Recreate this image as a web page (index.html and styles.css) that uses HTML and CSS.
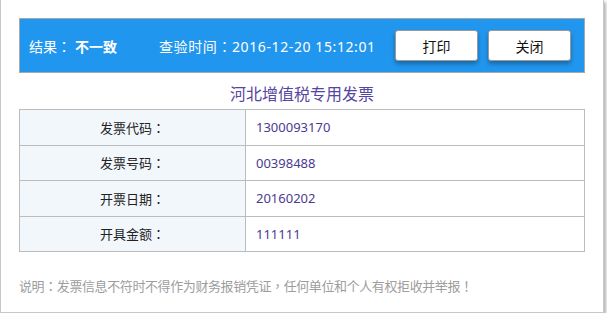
FILE: index.html
```html
<!DOCTYPE html>
<html lang="zh-CN">
<head>
    <meta charset="UTF-8">
    <meta name="viewport" content="width=device-width, initial-scale=1.0">
    <title>发票查验结果</title>
    <link rel="stylesheet" href="styles.css">
</head>
<body>
    <div class="panel">
        <div class="result-bar">
            <span class="result">结果<span class="punct" lang="zh-TW">：</span><b>不一致</b></span>
            <span class="check-time">查验时间<span class="punct" lang="zh-TW">：</span>2016-12-20 15:12:01</span>
            <button type="button" class="btn">打印</button>
            <button type="button" class="btn">关闭</button>
        </div>
        <h2 class="invoice-title">河北增值税专用发票</h2>
        <table class="invoice-table">
            <tr>
                <th>发票代码<span class="punct" lang="zh-TW">：</span></th>
                <td>1300093170</td>
            </tr>
            <tr>
                <th>发票号码<span class="punct" lang="zh-TW">：</span></th>
                <td>00398488</td>
            </tr>
            <tr>
                <th>开票日期<span class="punct" lang="zh-TW">：</span></th>
                <td>20160202</td>
            </tr>
            <tr>
                <th>开具金额<span class="punct" lang="zh-TW">：</span></th>
                <td>111111</td>
            </tr>
        </table>
        <p class="note">说明<span class="punct" lang="zh-TW">：</span>发票信息不符时不得作为财务报销凭证<span class="punct" lang="zh-TW">，</span>任何单位和个人有权拒收并举报<span class="punct" lang="zh-TW">！</span></p>
    </div>
</body>
</html>
```

FILE: styles.css
```css
* {
    box-sizing: border-box;
    margin: 0;
    padding: 0;
    font-family: 'Noto Sans', 'Noto Sans CJK SC', sans-serif;
}

body {
    background: #fff;
}

/* centred full-width punctuation, as on the original page */
.punct {
    font-family: 'Noto Sans CJK TC', sans-serif;
}

.panel {
    width: 604px;
    height: 313px;
    padding: 18px 18px 0;
    background: #fff;
    border: 1px solid #c8c8c8;
    border-top: none;
    box-shadow: 2px 2px 3px rgba(0, 0, 0, 0.3);
}

.result-bar {
    display: flex;
    align-items: center;
    height: 55px;
    padding: 0 13px 0 9px;
    background: #2196ee;
    border: 1px solid #a8a8a8;
    color: #fff;
    font-size: 14px;
}

.result b {
    font-weight: bold;
    margin-left: 4px;
}

.check-time {
    margin-left: 42px;
    letter-spacing: 0.6px;
    flex: 1;
}

.btn {
    width: 83px;
    height: 31px;
    margin-left: 10px;
    background: #fff;
    border: 1px solid #9a9a9a;
    border-radius: 3px;
    box-shadow: 0 3px 4px rgba(0, 0, 0, 0.3);
    color: #111;
    font-size: 14px;
    cursor: pointer;
}

.invoice-title {
    padding-top: 6px;
    height: 36px;
    line-height: 30px;
    text-align: center;
    font-size: 16px;
    font-weight: normal;
    color: #5546a0;
}

.invoice-table {
    width: 100%;
    border-collapse: collapse;
    font-size: 13px;
}

.invoice-table th,
.invoice-table td {
    height: 35.5px;
    border: 1px solid #bcbcbc;
}

.invoice-table th {
    width: 226px;
    background: #f2f7fc;
    font-weight: normal;
    color: #222;
    text-align: center;
}

.invoice-table td {
    padding-left: 10px;
    color: #4a3b92;
    text-align: left;
}

.note {
    margin-top: 24px;
    font-size: 13px;
    letter-spacing: -0.4px;
    color: #9d9d9d;
}
```
